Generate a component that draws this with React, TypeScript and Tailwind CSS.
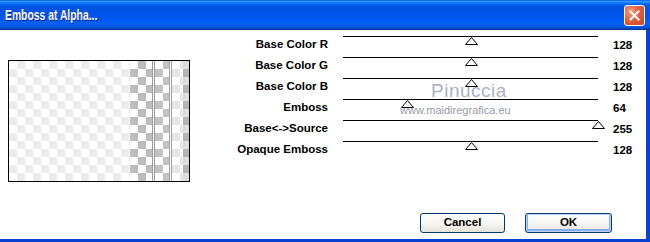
import React from "react";

const rows: { label: string; value: number }[] = [
  { label: "Base Color R", value: 128 },
  { label: "Base Color G", value: 128 },
  { label: "Base Color B", value: 128 },
  { label: "Emboss", value: 64 },
  { label: "Base<->Source", value: 255 },
  { label: "Opaque Emboss", value: 128 },
];

function Thumb({ value }: { value: number }) {
  return (
    <svg
      className="absolute top-0"
      style={{ left: value - 6.5 }}
      width="13"
      height="8"
      viewBox="0 0 13 8"
    >
      <polygon points="0.5,7.5 6.5,0.5 12.5,7.5" fill="white" stroke="black" strokeWidth="1" />
    </svg>
  );
}

export default function App() {
  return (
    <div
      className="w-[650px] h-[242px] flex flex-col overflow-hidden select-none"
      style={{ fontFamily: '"Liberation Sans", Arial, sans-serif' }}
    >
      {/* Title bar */}
      <div className="h-[30px] shrink-0 flex items-center justify-between pl-[5px] pr-[5px] bg-[linear-gradient(to_bottom,#0058ee_0%,#3593ff_5%,#127dff_9%,#0262ee_15%,#0054e3_25%,#0055eb_56%,#005bf5_68%,#0262f0_80%,#0052d6_92%,#0040ab_96%,#003092_100%)]">
        <span className="inline-block origin-left scale-x-[0.74] whitespace-nowrap text-white font-bold text-[14px] leading-none pb-[1px] [text-shadow:1px_1px_0_#0a1f80]">
          Emboss at Alpha...
        </span>
        <div className="w-[21px] h-[21px] rounded-[3px] border border-white flex items-center justify-center bg-[radial-gradient(circle_at_30%_30%,#f4a184_0%,#e5603e_45%,#c9401f_100%)]">
          <svg width="11" height="11" viewBox="0 0 11 11">
            <path d="M1.5 1.5 L9.5 9.5 M9.5 1.5 L1.5 9.5" stroke="white" strokeWidth="2" strokeLinecap="square" />
          </svg>
        </div>
      </div>

      {/* Body */}
      <div className="relative flex-1 flex bg-white border-r-4 border-b-[3px] border-[#0842d0]">
        {/* Preview */}
        <div className="w-[190px] shrink-0 pl-[8px] pt-[30px]">
          <div className="w-[182px] h-[122px] border border-black flex">
            <div className="w-[121px] h-full bg-[conic-gradient(#ececec_25%,#ffffff_0_50%,#ececec_0_75%,#ffffff_0)] bg-[length:16px_16px]" />
            <div className="w-[22px] h-full bg-[conic-gradient(#bdbdbd_25%,#ffffff_0_50%,#bdbdbd_0_75%,#ffffff_0)] bg-[length:16px_16px]" />
            <div className="w-px h-full bg-[#9a9a9a]" />
            <div className="w-px h-full bg-white" />
            <div className="w-px h-full bg-[#9a9a9a]" />
            <div className="w-[14px] h-full bg-[conic-gradient(#c2c2c2_25%,#ffffff_0_50%,#c2c2c2_0_75%,#ffffff_0)] bg-[length:16px_16px]" />
            <div className="w-px h-full bg-[#a0a0a0]" />
            <div className="w-px h-full bg-white" />
            <div className="w-px h-full bg-[#a0a0a0]" />
            <div className="w-[11px] h-full bg-[conic-gradient(#e6e6e6_25%,#ffffff_0_50%,#e6e6e6_0_75%,#ffffff_0)] bg-[length:16px_16px]" />
            <div className="flex-1 h-full bg-[conic-gradient(#b5b5b5_25%,#dddddd_0_50%,#b5b5b5_0_75%,#dddddd_0)] bg-[length:16px_16px]" />
          </div>
        </div>

        {/* Sliders and buttons */}
        <div className="flex-1 flex flex-col pt-[6px]">
          {rows.map((r) => (
            <div key={r.label} className="h-[21px] flex">
              <div className="w-[138px] text-right font-bold text-[11.5px] leading-[14px] pt-[1px] text-black">
                {r.label}
              </div>
              <div className="relative w-[255px] ml-[15px] h-full border-t border-black">
                <Thumb value={r.value} />
              </div>
              <div className="ml-[15px] font-bold text-[11.5px] leading-[14px] pt-[2px] text-black">
                {r.value}
              </div>
            </div>
          ))}

          <div className="mt-[51px] flex justify-end gap-[20px] pr-[34px]">
            <button className="w-[85px] h-[20px] rounded-[3px] border border-[#003c74] bg-[linear-gradient(to_bottom,#ffffff_0%,#f5f4ef_60%,#e3e2da_100%)] font-bold text-[11.5px] text-black leading-none">
              Cancel
            </button>
            <button className="w-[87px] h-[20px] rounded-[3px] border border-[#003c74] bg-[linear-gradient(to_bottom,#ffffff_0%,#f5f4ef_60%,#e3e2da_100%)] shadow-[inset_0_0_0_1px_#bcd4f6,inset_0_-1px_0_2px_#89adf0] font-bold text-[11.5px] text-black leading-none">
              OK
            </button>
          </div>
        </div>

        {/* Watermark */}
        <div className="absolute left-[431px] top-[51px] text-[19px] leading-none text-[#aab1c8] tracking-[0.5px] pointer-events-none">
          Pinuccia
        </div>
        <div className="absolute left-[400px] top-[75px] text-[11px] leading-none text-[#959aa8] pointer-events-none">
          www.maidiregrafica.eu
        </div>
      </div>
    </div>
  );
}
